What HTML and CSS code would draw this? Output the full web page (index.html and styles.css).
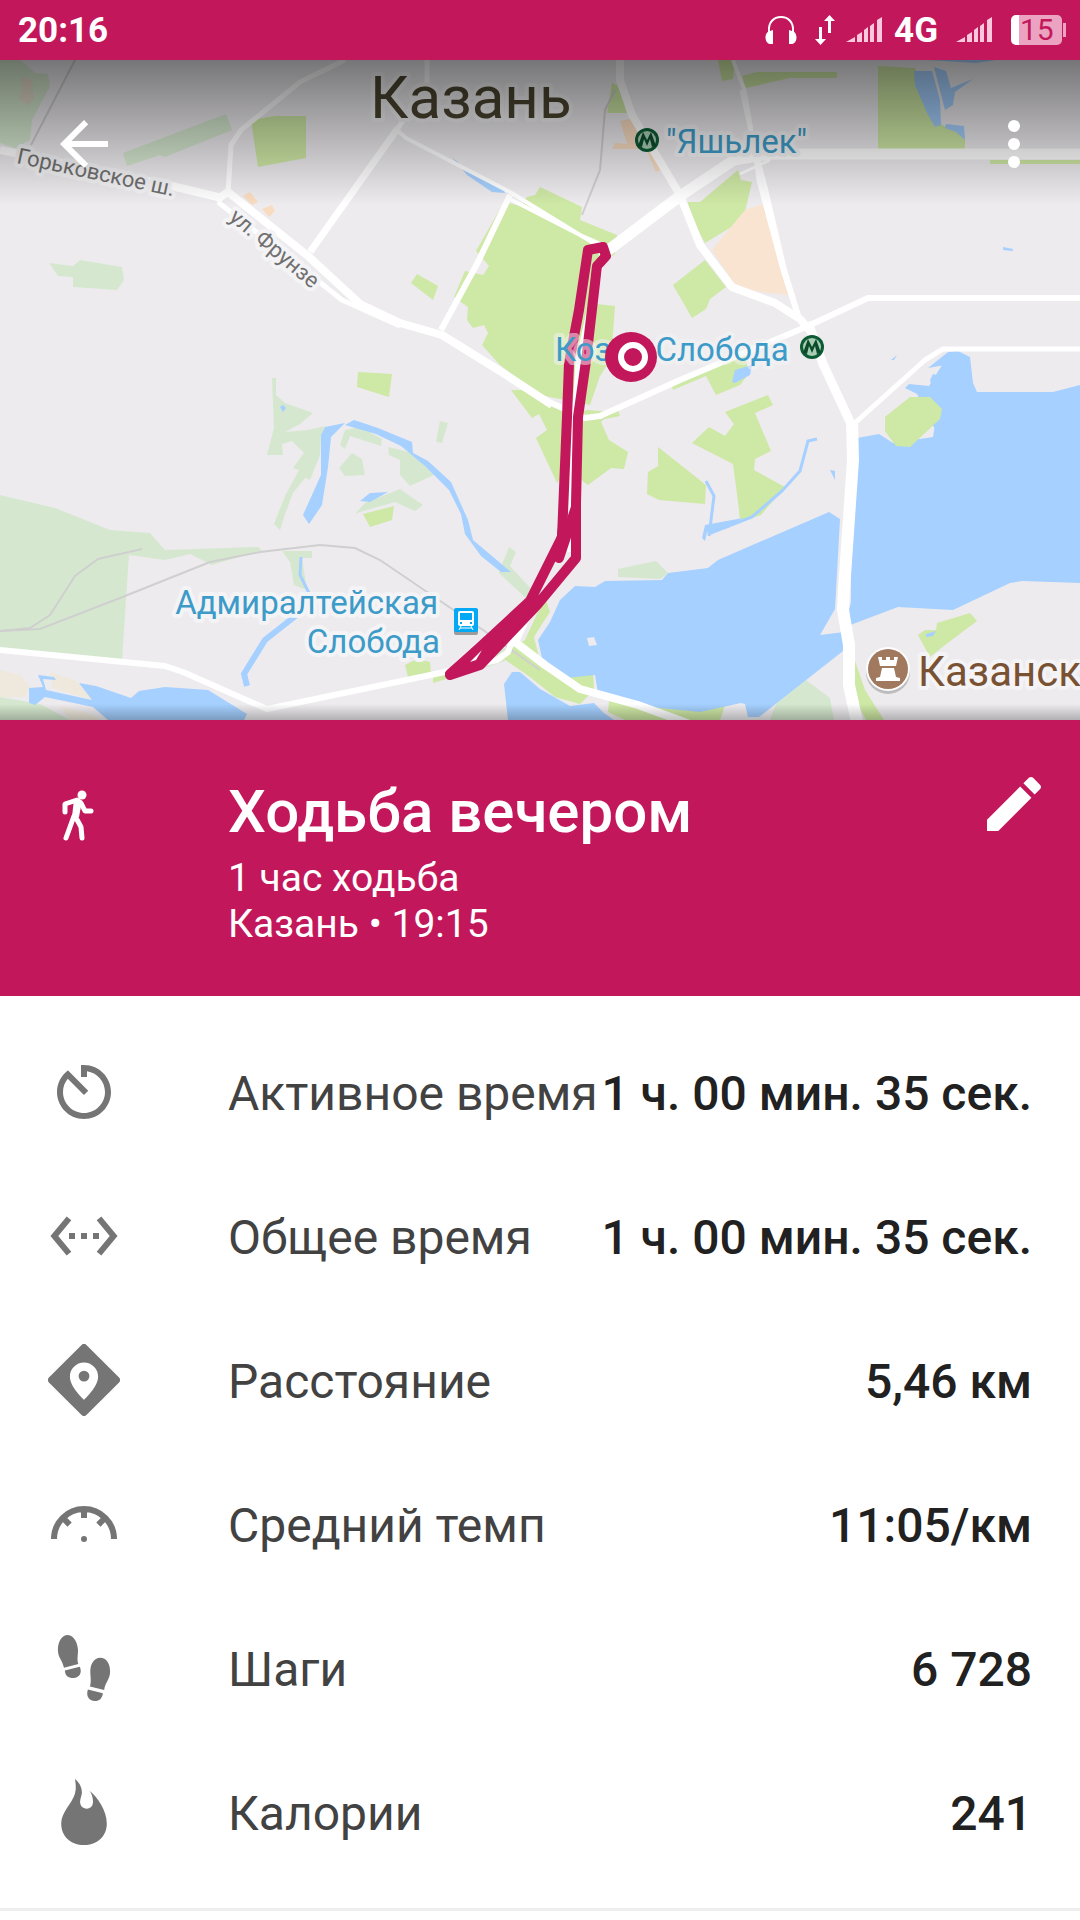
FILE: index.html
```html
<!DOCTYPE html>
<html lang="ru">
<head>
    <meta charset="UTF-8">
    <meta name="viewport" content="width=device-width, initial-scale=1.0">
    <title>Ходьба вечером</title>
    <link rel="stylesheet" href="styles.css">
</head>
<body>
    <div class="status-bar">
        <span>20:16</span>
        <div class="status-icons">
            <svg class="icon-headphones" viewBox="0 0 32 30">
                <path d="M4 17C3 7 9 2 16 2s13 5 12 15" fill="none" stroke="#fff" stroke-width="2"/>
                <path d="M8 15v14H5c-6-1-6-12 0-13zM24 15v14h3c6-1 6-12 0-13z" fill="#fff"/>
            </svg>
            <svg class="icon-arrows" viewBox="0 0 20 30">
                <path d="M4 12h3v12h4l-5.500 6L0 24h4zM13 18h3V6h4l-5.500-6L9 6h4z" fill="#fff"/>
            </svg>
            <svg class="icon-signal" viewBox="0 0 36 26">
                <path d="M0 25l9-5v5zM11 25v-7l5-3v10zM18 25V13l4-3v15zM24 25V9l4-3v19zM31 25V3l5-3v25z" fill="#fbc8dd"/>
            </svg>
            <span class="network">4G</span>
            <svg class="icon-signal" viewBox="0 0 36 26">
                <path d="M0 25l9-5v5zM11 25v-7l5-3v10zM18 25V13l4-3v15zM24 25V9l4-3v19zM31 25V3l5-3v25z" fill="#fbc8dd"/>
            </svg>
            <span class="battery">15</span>
        </div>
    </div>

    <div class="map">
        <svg class="map-canvas" viewBox="0 60 1080 660">
            <!-- лес -->
            <g fill="#d5e8cf">
                <path d="M0 60h20l15 13 13 1 2 12-18 34-2 20-15 8-15-5z"/>
                <path d="M123 153l103-39 6 16-67 27-5-2-33 11z"/>
                <path d="M49 263l24 3 7-6 42 7 2 13-7 10-44-3v-10l-15-1z"/>
                <path d="M0 495l55 13 55 22 40 3 15 17 93-3 4 3-50 15-22-11-25 6-36-5-7 105-122-10z"/>
                <path d="M0 697l40 7 30 16H0z"/>
                <path d="M272 378h4v17l9 8 28 10-13 11-15 8 23-2 17-4-4 10-1 19-10 25-5-2-12 15-8 21-5 16-6-6 11-28 14-26-6-2 11-15-12-12-10 3 1 11h-16l7-27z"/>
                <path d="M352 453l10 6 3 16-20 1-6-8z"/>
                <path d="M345 430l15-3 22 12-1 7-31-10-5 13-5-4z"/>
                <path d="M388 447l25 6 21 22-24 11-10-11v-15l-11-5z"/>
                <path d="M355 514l10-11 35-14 23 16-8 6-20-9-35 10z"/>
                <path d="M440 421l8 2-6 20-6-1z"/>
                <path d="M282 551h30v7h-10l5 32-13-5-4-23z"/>
                <path d="M501 567l8-20 7 5-6 14 24 26-4 10-31-29z"/>
                <path d="M618 569l38-8 12 12-8 6-42-2z"/>
                <path d="M770 720l6-16 30-24 24 18 4 22z"/>
                <path d="M482 637l10 13 16-2-3 13-21 7z"/>
            </g>
            <path d="M0 670l20 5 10 12-5 10H0zM50 672l25 8 18 20-40-12zM60 706l30 8 10 6H70z" fill="#efe9dd"/>
            <path d="M22 76l10 4 2 18-6 8-10-8 4-8z" fill="#e3dccb"/>

            <!-- парки -->
            <g fill="#cee8a5">
                <path d="M251 120l24-4h31v42l-48 9z"/>
                <path d="M411 283l6-9 21 12-5 14z"/>
                <path d="M358 372l34 2-3 23-32-10z"/>
                <path d="M540 187l42 20-2 13 37 15-2 19-13 8-6 42 19 2-4 53-11 17-10 29-50-10-40-30-18-20 6-12-4-8-11 3-6-8 1-13-14-10 11-26 18 4 6-9-13-15 28-49 17 4 6-9 8-2z"/>
                <path d="M511 390l13 0 42 23 22-3 23 2-10 10 8 18 19 12-4 17-13-1-23 17-20-15-11 13-21-45 11-8-8-16-7 4z"/>
                <path d="M363 514l31-8-2 14-22 7z"/>
                <path d="M405 665l12-6 13 3 1 12-23 3zM433 676l13-4v7l-13 4z"/>
                <path d="M687 202l13 0 38-32 3 10 11 2-9 38-38 23-10-18z"/>
                <path d="M673 285l32-25 21 27-16 12-4 10-14 9z"/>
                <path d="M718 60h17l-2 19-11 2zM742 76l15-4h80v6h-47l-44 10z"/>
                <path d="M878 66l37 2 25 56 25 11v14h-87z"/>
                <path d="M990 160h90v4h-90zM612 83l6 3 12 27-23 0z"/>
                <path d="M672 386l38-20 35-10 4 17-9 12-24 10-10-19-33 14zM590 415l28-5 2 6-30 6z"/>
                <path d="M692 443l17-16 16 9 9-12-9-12 43-17 5 10-18 8 16 38-16 8-1 11 31 17-24 28-12 4-9 0-3-25-4-30z"/>
                <path d="M658 447l48 38-1 19-46-4-12-6 1-22 10-6z"/>
                <path d="M918 635l7-5 11 0 1-7 33-10 7 8-32 24-15 12z"/>
                <path d="M853 655l12 35 19 30h-18l-13-25z"/>
                <path d="M546 600l4 12-8 12-8 13 6 24 20 13 25-3 8-1 1 20-14 14-25-7-25-20-26-18 6-10 15-9 12-26z"/>
                <path d="M587 640h2l1 33h-4zM610 692l6-11 44 16 35-3 30 11-5 15h-95l-17-8z"/>
            </g>

            <path d="M712 250l33-40 21-7 22 92-28-3-25-7z" fill="#f8e4d1"/>
            <path d="M243 196l7-4 8 10-6 3zM262 209l10-4 3 6-6 6zM612 149l3-6 12 1-7-23 14-3 27 52-5 2-10-23z" fill="#f8dcc1"/>

            <!-- вода -->
            <g fill="#a5d0ff">
                <path d="M930 380l3-6 10 3 2-12-17 3 20-16 10-1 12 6 3 26 4 9h76l27-7v198l-58-2-12 2-57 27-55-3-53 20 6-25V440l6-2 22-4 14 9 40-6 5-30z"/>
                <path d="M905 388l4-4 20 2 18-29 18-2 4 42-25 50-27-53z"/>
                <path d="M840 519l-11-7-111 48-10 8-40 5-6 7-57 1-10 6-20-1-15 14-10 22-12 18 4 18 25 20 28-3 3 18 22 11 80 8 41-9 4 1 3 13h11l84-66 1-19-24 3 15-26z"/>
                <path d="M504 684l8-12h8l20 17 30 17 24-3 10 10 10 7H508z"/>
                <path d="M29 688l14-1-5-12 16 2 2 3-13-1 3 11 46 10-13-17 17 3 35 12 8-7 26-4 43 3 39 24-3 6H108l-15-13-48-10-10 8-6-2z"/>
                <path d="M303 515l18-40V435l4-8 20-4-14 14-3 30-6 38-13 19z"/>
                <path d="M345 425l9-5 24 8 34 14 1 11 15 8 23 21 17 38 5 20 38 32-10 0-20-16-16-22-4-20-12-24-24-24-24-20-25-12z"/>
                <path d="M360 501l10-8 18-1-18 10zM280 407l3-2 3 3-3 4z"/>
                <path d="M452 157l13 12 38 18 2 6-13-1-25-17z"/>
                <path d="M914 71h18l8 29 1 25-6 2-8-14-12-28zM934 67l12 4 5 17 22-9-18 13-2 13-8 5zM946 124l18 2 1 14-9-8-11-4zM928 60h68l-20 3z"/>
                <path d="M732 382l3-12 17-5-2 10-15 8zM830 470l5 1v9zM1003 247l10 2v2l-10-1zM891 360l6-5-3 5z"/>
                <path d="M702 538l3-13 38-7-15 10-21 4-2 9z"/>
                <path d="M926 634l10-3-3 5-7 1z"/>
            </g>
            <g fill="none" stroke="#a5d0ff" stroke-width="3">
                <path d="M706 481l8 15-5 40"/>
                <path d="M708 534l44-17 30-26 18-20 8-30 9-2"/>
                <path d="M301 557l-1 18 9 18-6 17"/>
                <path d="M303 610l-38 30-21 34 3 12" stroke-width="6"/>
            </g>
            <path d="M910 397h20l12 12-2 10-30 28-14-1-11-15v-14z" fill="#cee8a5"/>
            <path d="M587 638l7-1 3 8-8 1z" fill="#edebee"/>

            <!-- железная дорога -->
            <g fill="none" stroke="#d0cfcf" stroke-width="2">
                <path d="M75 60L31 145M615 90l-10 20-5 60-18 45"/>
                <path d="M0 631l40-2 80-31 90-36 50-10 60-7 35 3 25 12 50 34 53 36 57 40"/>
                <path d="M0 631l30-3 20-13 25-39 23-17 44-10"/>
            </g>

            <!-- дороги -->
            <g fill="none" stroke="#fff" stroke-linejoin="round">
                <path d="M0 150l172 36 50 12" stroke-width="8"/>
                <path d="M216 200l12-8 80 64 52 48 40 19 42 12 58 36 52 34" stroke-width="8"/>
                <path d="M218 202l74 58 50 40 58 26" stroke-width="5"/>
                <path d="M228 193l3-48 10-15 59-48 45-22M427 60v25l-29 43" stroke-width="5"/>
                <path d="M310 252l88-124" stroke-width="7"/>
                <path d="M398 131l8 7 104 54 70 43 27 16M510 199l70 36 30 13" stroke-width="4"/>
                <path d="M510 195l-32 67-37 68" stroke-width="6"/>
                <path d="M606 252l74-56 54-36 36-6h310" stroke-width="11"/>
                <path d="M770 160l-30 14" stroke-width="3"/>
                <path d="M620 60v20l12 35 23 38 25 42 20 50 32 42 43 16 25 16 12 14" stroke-width="8"/>
                <path d="M733 60l12 32 8 48 12 45 20 85 18 58" stroke-width="4"/>
                <path d="M742 90l13 60 4 30 24 90 16 50" stroke-width="5"/>
                <path d="M1080 298H868l-60 28-128 54-80 36-15 2-45-20" stroke-width="6"/>
                <path d="M1080 349H943l-18 11-69 62" stroke-width="5"/>
                <path d="M808 322l15 42 29 62" stroke-width="9"/>
                <path d="M852 420l1 40-9 130-1 20 6 35v40l8 37" stroke-width="12"/>
                <path d="M0 650l165 16 18 6 84 37 173-36 57-13 11-8 12-32" stroke-width="6"/>
                <path d="M515 642l10-22 50-62M515 642l30 23 35 24 58 16 60 22" stroke-width="8"/>
                <path d="M603 252l-24 110-10 160 2 30" stroke-width="7"/>
            </g>

            <!-- маршрут -->
            <g class="track">
                <path d="M588 250l-9 60-10 53-2 54-5 120-32 64-80 72 30-10 57-58 29-45 1-55 2-86 8-56 10-93 9-13-3-7z" stroke="none"/>
                <path d="M588 250l-9 60-10 53-2 54-5 120-32 64-80 74 30-10 57-60 39-47V503l2-86 8-56 11-95 9-10-3-9z"/>
                <path d="M576 507l-17 51 4-30"/>
                <path class="track-fill" d="M450 674l80-70-50 59z"/>
            </g>
            <path d="M470 662l12-12-6 10z" fill="#fff"/>

            <!-- подписи -->
            <text class="place city" x="370" y="118">Казань</text>
            <text class="place station" x="666" y="153">"Яшьлек"</text>
            <text class="place station see-through" x="555" y="361">Козья Слобода</text>
            <text class="place station" x="438" y="614" text-anchor="end">Адмиралтейская</text>
            <text class="place station" x="440" y="653" text-anchor="end">Слобода</text>
            <text class="place street" transform="translate(16 163) rotate(12)">Горьковское ш.</text>
            <text class="place street" transform="translate(228 219) rotate(40)">ул. Фрунзе</text>
            <text class="place sight" x="918" y="686">Казанск</text>

            <ellipse cx="631" cy="357" rx="26" ry="25" fill="#c2185b"/>
            <circle cx="633" cy="357" r="12" fill="none" stroke="#fff" stroke-width="6"/>

            <g id="metro">
                <circle cx="647" cy="140" r="12" fill="#0b5b34"/>
                <circle cx="647" cy="140" r="9" fill="#a9cdb4"/>
                <path d="M638 146l5-14 4 8 4-8 5 14-4 1-2-8-3 7-3-7-2 8z" fill="#0b4a2b"/>
            </g>
            <use href="#metro" x="165" y="207"/>

            <rect x="454" y="610" width="24" height="25" rx="2" fill="#9c9c9c"/>
            <rect x="454" y="608" width="24" height="24" rx="2" fill="#03a9f4"/>
            <path d="M460 611h12a2 2 0 0 1 2 2v11a2 2 0 0 1-2 2h-12a2 2 0 0 1-2-2v-11a2 2 0 0 1 2-2z" fill="#fff"/>
            <path d="M460 613h12v7h-12zM460 622h2v2h-2zM470 622h2v2h-2z" fill="#03a9f4"/>
            <path d="M461 626l-2 4M471 626l2 4M460 628h12" fill="none" stroke="#fff" stroke-width="1"/>

            <circle cx="888" cy="672" r="22" fill="#bdbdbd"/>
            <circle cx="888" cy="669" r="22" fill="#fff"/>
            <circle cx="888" cy="669" r="20" fill="#a1795f"/>
            <path d="M878 657h4v3h4v-3h4v3h4v-3h4l-2 9h-16zM882 668h12l2 9 4 1v3h-24v-3l4-1z" fill="#fff"/>
        </svg>

        <div class="toolbar">
            <button class="icon-button" aria-label="Назад">
                <svg viewBox="0 0 24 24"><path d="M20 11H7.830l5.590-5.590L12 4l-8 8 8 8 1.410-1.410L7.830 13H20v-2z"/></svg>
            </button>
            <button class="icon-button" aria-label="Ещё">
                <svg viewBox="0 0 24 24"><circle cx="12" cy="6" r="2"/><circle cx="12" cy="12" r="2"/><circle cx="12" cy="18" r="2"/></svg>
            </button>
        </div>
    </div>

    <header class="summary">
        <svg class="walk-icon" viewBox="0 0 60 60">
            <circle cx="34" cy="7" r="4.500" fill="#fff"/>
            <path d="M17 24v-8l12-4 4 3 4 8h6M26 28l-8 22M27 28l6 11 1 11" fill="none" stroke="#fff" stroke-width="5" stroke-linecap="round" stroke-linejoin="round"/>
            <path d="M26 11l8 2-3 16h-7z" fill="#fff"/>
        </svg>
        <div class="summary-text">
            <h1>Ходьба вечером</h1>
            <p>1 час ходьба</p>
            <p>Казань • 19:15</p>
        </div>
        <button class="icon-button" aria-label="Изменить">
            <svg viewBox="0 0 24 24"><path d="M3 17.250V21h3.750L17.810 9.940l-3.750-3.750L3 17.250zM20.710 7.040c.390-.390.390-1.020 0-1.410l-2.340-2.340c-.390-.390-1.020-.390-1.410 0l-1.830 1.830 3.750 3.750 1.830-1.830z"/></svg>
        </button>
    </header>

    <dl class="stats">
        <div class="stat">
            <svg viewBox="0 0 24 24"><path d="M11 3v4h2V5.080c3.390.490 6 3.390 6 6.920 0 3.870-3.130 7-7 7s-7-3.130-7-7c0-1.680.590-3.220 1.580-4.420L12 13l1.410-1.410-6.800-6.800v.020C4.420 6.450 3 9.050 3 12c0 4.970 4.020 9 9 9s9-4.030 9-9-4.030-9-9-9h-1z"/></svg>
            <dt>Активное время</dt>
            <dd>1 ч. 00 мин. 35 сек.</dd>
        </div>
        <div class="stat">
            <svg viewBox="0 0 24 24"><path d="M7.770 6.760L6.230 5.480.820 12l5.410 6.520 1.540-1.280L3.420 12l4.350-5.240zM7 13h2v-2H7v2zm10-2h-2v2h2v-2zm-6 2h2v-2h-2v2zm6.770-7.520l-1.540 1.280L20.580 12l-4.350 5.240 1.540 1.280L23.180 12l-5.410-6.520z"/></svg>
            <dt>Общее время</dt>
            <dd>1 ч. 00 мин. 35 сек.</dd>
        </div>
        <div class="stat">
            <svg viewBox="0 0 24 24">
                <path d="M11.200.300a1.200 1.200 0 0 1 1.600 0l10.900 10.900a1.200 1.200 0 0 1 0 1.600L12.800 23.700a1.200 1.200 0 0 1-1.600 0L.300 12.800a1.200 1.200 0 0 1 0-1.600z"/>
                <path d="M12 6.200c-2.600 0-4.700 2.100-4.700 4.700 0 3.400 4.700 7.700 4.700 7.700s4.700-4.300 4.700-7.700c0-2.600-2.100-4.700-4.700-4.700z" fill="#fff"/>
                <circle cx="12" cy="10.700" r="1.800"/>
            </svg>
            <dt>Расстояние</dt>
            <dd>5,46 км</dd>
        </div>
        <div class="stat">
            <svg viewBox="0 0 24 24">
                <path d="M2 17a10 10 0 0 1 20 0M12 7v3M5 10l2.200 2.200M19 10l-2.200 2.200" fill="none" stroke="#757575" stroke-width="2"/>
                <circle cx="12" cy="17" r="1"/>
            </svg>
            <dt>Средний темп</dt>
            <dd>11:05/км</dd>
        </div>
        <div class="stat">
            <svg viewBox="0 0 24 24">
                <path d="M6.600 1C4.500 1 3.300 3.400 3.300 6s1.600 3.500 2 5.900l4.800-1.200C9.600 9 10 8 10 6S8.700 1 6.600 1zM5.600 12.800l5-1.200c.900 2.100-.200 3.700-2.100 3.700s-2.700-.700-2.900-2.500zM17.400 8.600c-2.100 0-3.300 2.200-3.300 4.600 0 1.800.400 3-.1 5l4.700 1.100c.400-2.500 2-3.500 2-6.100s-1.200-4.600-3.300-4.600zM13.300 19.200l5 1.200c-.3 1.800-1.100 2.600-2.700 2.600-2 0-3-1.700-2.300-3.800z"/>
            </svg>
            <dt>Шаги</dt>
            <dd>6 728</dd>
        </div>
        <div class="stat">
            <svg viewBox="0 0 24 24"><path d="M9 1c1 .700 2.400 2.500 2.300 4.600 0 .800-.6 2-.6 3 0 1.300.900 2.300 2.200 2.300S15 9.900 15 8.600c0-1.500-.4-2.700-1.200-3.700 2.600 2 5.800 6.600 5.800 10.900 0 4.400-3.300 7.200-7.600 7.200s-7.600-2.800-7.600-7.200C4.400 12 8 9.200 9 5.800c.5-1.800.2-3.300 0-4.800z"/></svg>
            <dt>Калории</dt>
            <dd>241</dd>
        </div>
    </dl>
</body>
</html>
```
FILE: styles.css
```css
* {
    box-sizing: border-box;
}
body {
    margin: 0;
    background: #fff;
    font-family: Roboto, sans-serif;
    color: #212121;
}
.status-bar {
    display: flex;
    justify-content: space-between;
    align-items: center;
    height: 60px;
    padding: 0 14px 0 18px;
    background: #c2185b;
    color: #fff;
    font-size: 35px;
    font-weight: bold;
}
.status-icons {
    display: flex;
    align-items: center;
}
.icon-headphones {
    width: 32px;
    height: 30px;
    margin-right: 18px;
}
.icon-arrows {
    width: 20px;
    height: 30px;
    margin-right: 11px;
}
.icon-signal {
    width: 36px;
    height: 26px;
}
.network {
    margin: 0 18px 0 12px;
}
.battery {
    position: relative;
    width: 51px;
    height: 30px;
    margin: 0 4px 0 19px;
    border-left: 8px solid #fff;
    border-radius: 5px;
    background: #eca3c1;
    color: #c2185b;
    font-size: 30px;
    font-weight: normal;
    line-height: 30px;
    padding-left: 1px;
}
.battery::after {
    content: "";
    position: absolute;
    right: -4px;
    top: 8px;
    width: 3px;
    height: 14px;
    background: #eca3c1;
}
.map {
    position: relative;
    background: #edebee;
}
.map::after {
    content: "";
    position: absolute;
    inset: 0;
    background:
        linear-gradient(rgba(0, 0, 0, 0.5), rgba(0, 0, 0, 0)) top / 100% 145px no-repeat,
        linear-gradient(rgba(0, 0, 0, 0), rgba(0, 0, 0, 0.25)) bottom / 100% 16px no-repeat;
}
.map-canvas {
    display: block;
    width: 100%;
}
.track {
    fill: none;
    stroke: #c2185b;
    stroke-width: 10px;
    stroke-linejoin: round;
    stroke-linecap: round;
}
.track-fill {
    fill: #c2185b;
}
.place {
    paint-order: stroke;
    stroke: #f4f3f5;
    stroke-width: 8px;
    stroke-linejoin: round;
}
.city {
    font-size: 60px;
    fill: #4a4430;
}
.station {
    font-size: 33px;
    fill: #3c9bc8;
}
.see-through {
    stroke-opacity: 0.5;
}
.street {
    font-size: 22px;
    fill: #707070;
}
.sight {
    font-size: 42px;
    fill: #795234;
}
.toolbar {
    position: absolute;
    z-index: 1;
    top: 48px;
    left: 48px;
    right: 30px;
    display: flex;
    justify-content: space-between;
}
.icon-button {
    width: 72px;
    height: 72px;
    padding: 0;
    border: none;
    background: none;
    cursor: pointer;
}
.icon-button svg {
    display: block;
    width: 72px;
    height: 72px;
    fill: #fff;
}
.summary {
    display: flex;
    align-items: flex-start;
    min-height: 276px;
    padding: 48px 30px 0 48px;
    background: #c2185b;
    color: #fff;
}
.walk-icon {
    width: 60px;
    height: 60px;
    margin: 20px 120px 0 0;
}
.summary-text {
    flex: 1;
    padding-top: 8px;
}
.summary h1 {
    margin: 0;
    font-size: 60px;
    font-weight: 500;
    line-height: 72px;
}
.summary p {
    margin: 0;
    font-size: 39px;
    line-height: 46px;
}
.summary h1 + p {
    margin-top: 7px;
}
.stats {
    margin: 0;
    padding: 24px 0;
    border-bottom: 3px solid #eee;
}
.stat {
    display: flex;
    align-items: center;
    height: 144px;
    padding: 0 48px;
    font-size: 48px;
    white-space: nowrap;
}
.stat svg {
    width: 72px;
    height: 72px;
    margin-right: 108px;
    flex: none;
    fill: #757575;
}
.stat dt,
.stat dd {
    padding-top: 2px;
}
.stat dt {
    color: #424242;
}
.stat dd {
    margin: 0 0 0 auto;
    font-weight: 500;
}
```
